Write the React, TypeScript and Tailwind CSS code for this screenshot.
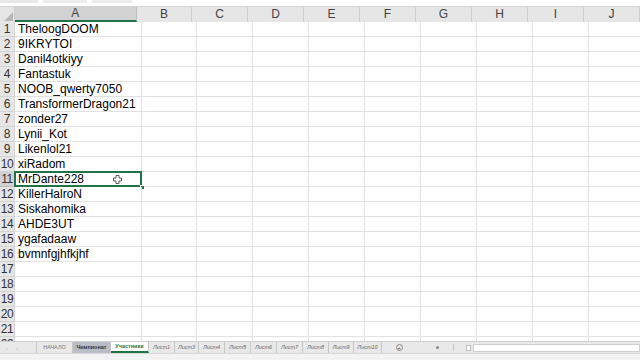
import React from "react";

const names = [
  "TheloogDOOM",
  "9IKRYTOI",
  "Danil4otkiyy",
  "Fantastuk",
  "NOOB_qwerty7050",
  "TransformerDragon21",
  "zonder27",
  "Lynii_Kot",
  "Likenlol21",
  "xiRadom",
  "MrDante228",
  "KillerHalroN",
  "Siskahomika",
  "AHDE3UT",
  "ygafadaaw",
  "bvmnfgjhfkjhf",
];

const cols = ["B", "C", "D", "E", "F", "G", "H", "I", "J"];
const colW = [55, 56, 56, 56, 56, 56, 56, 56, 56];

const tabs = [
  { label: "Лист1", w: "w-[26px]" },
  { label: "Лист3", w: "w-[24px]" },
  { label: "Лист4", w: "w-[26px]" },
  { label: "Лист5", w: "w-[26px]" },
  { label: "Лист6", w: "w-[26px]" },
  { label: "Лист7", w: "w-[26px]" },
  { label: "Лист8", w: "w-[26px]" },
  { label: "Лист9", w: "w-[25px]" },
  { label: "Лист10", w: "w-[28px]" },
];

const CursorIcon = () => (
  <svg width="9" height="9" viewBox="0 0 9 9" className="absolute left-[98px] top-[3px]">
    <path d="M3 0.5h3v2.5h2.5v3H6v2.5H3V6H0.5V3H3z" fill="white" stroke="#333" strokeWidth="0.8" />
  </svg>
);

export default function App() {
  return (
    <div className="w-[640px] h-[360px] overflow-hidden bg-white flex flex-col font-['Liberation_Sans',Arial,sans-serif]">
      {/* formula bar remnant */}
      <div className="h-[7px] shrink-0 flex items-start gap-[5px] border-b border-[#d4d4d4] bg-white">
        <div className="w-[38px] h-[3px] bg-[#e8e8e8]" />
        <div className="w-[44px] h-[3px] bg-[#ececec]" />
        <div className="w-[40px] h-[3px] bg-[#ececec]" />
      </div>

      {/* column header */}
      <div className="h-[15px] shrink-0 flex bg-[#e6e6e6] text-[12px] text-[#444] leading-[15px]">
        <div className="w-[15px] relative border-r border-[#cfcfcf]">
          <svg width="9" height="9" viewBox="0 0 9 9" className="absolute right-[1px] bottom-[1px]">
            <path d="M9 0V9H0z" fill="#b8b8b8" />
          </svg>
        </div>
        <div className="w-[127px] text-center bg-[#d2d2d2] border-r border-[#bdbdbd] border-b-2 border-b-[#217346] leading-[13px]">
          A
        </div>
        {cols.map((c, i) => (
          <div
            key={c}
            style={{ width: colW[i] }}
            className="shrink-0 text-center border-r border-[#d0d0d0]"
          >
            {c}
          </div>
        ))}
      </div>

      {/* grid */}
      <div className="flex-1 min-h-0 overflow-hidden">
        {Array.from({ length: 22 }).map((_, r) => {
          const sel = r === 10;
          return (
            <div key={r} className="h-[15px] flex text-[12px] leading-[14px]">
              <div
                className={`w-[15px] shrink-0 text-center text-[#333] border-r border-b ${
                  sel ? "bg-[#d2d2d2] border-[#bdbdbd]" : "bg-[#e6e6e6] border-[#d4d4d4]"
                } ${r >= 9 ? "tracking-[-0.5px]" : ""}`}
              >
                {r + 1}
              </div>
              <div className="w-[127px] shrink-0 relative pl-[3px] text-black whitespace-nowrap border-r border-b border-[#e1e1e1]">
                {names[r] ?? ""}
                {sel && (
                  <>
                    <div className="absolute left-[-1px] top-[-1px] right-[-1px] bottom-[-1px] border-2 border-[#217346]" />
                    <CursorIcon />
                    <div className="absolute right-[-4px] bottom-[-4px] w-[5px] h-[5px] bg-[#217346] border border-white" />
                  </>
                )}
              </div>
              {cols.map((c, i) => (
                <div
                  key={c}
                  style={{ width: colW[i] }}
                  className="shrink-0 border-r border-b border-[#e1e1e1]"
                />
              ))}
            </div>
          );
        })}
      </div>

      {/* sheet tabs */}
      <div className="h-[12px] shrink-0 flex items-stretch bg-[#e9e9e9] border-t border-[#cfcfcf] text-[5.5px] italic text-[#666]">
        <div className="w-[34px] flex items-center gap-[8px] pl-[6px] text-[#b5b5b5] not-italic text-[6px] leading-none">
          <span>‹</span>
          <span>›</span>
        </div>
        <div className="w-[3px] border-r border-[#c8c8c8]" />
        <div className="w-[36px] flex items-center justify-center not-italic border-r border-[#c8c8c8] text-[#777]">
          НАЧАЛО
        </div>
        <div className="w-[38px] flex items-center justify-center not-italic bg-[#b9bdc6] text-[#334] border-r border-[#c8c8c8] font-bold">
          Чемпионат
        </div>
        <div className="w-[38px] flex items-center justify-center not-italic bg-white text-[#217346] font-bold border-b-2 border-[#217346] border-r border-r-[#c8c8c8]">
          Участники
        </div>
        {tabs.map((t) => (
          <div
            key={t.label}
            className={`${t.w} flex items-center justify-center border-r border-[#c8c8c8]`}
          >
            {t.label}
          </div>
        ))}
        <div className="w-[34px] flex items-center justify-center">
          <div className="w-[7px] h-[7px] rounded-full border border-[#888] flex items-center justify-center not-italic text-[6px] leading-none text-[#555]">
            +
          </div>
        </div>
        <div className="w-[18px]" />
        <div className="flex items-center gap-[2px] pl-[2px]">
          <div className="w-[3px] h-[3px] rounded-full bg-[#888]" />
        </div>
        <div className="w-[14px]" />
        <div className="w-[1px] bg-[#c8c8c8] my-[2px]" />
        <div className="w-[12px]" />
        <div className="flex-1 flex items-center pr-0">
          <div className="w-[5px] h-[6px] bg-white border border-[#bbb] mr-[2px]" />
          <div className="flex-1 h-[8px] bg-white border border-[#d0d0d0]" />
        </div>
      </div>

      {/* status bar */}
      <div className="h-[7px] shrink-0 bg-[#f3f3f3] border-t border-[#d8d8d8]" />
    </div>
  );
}
